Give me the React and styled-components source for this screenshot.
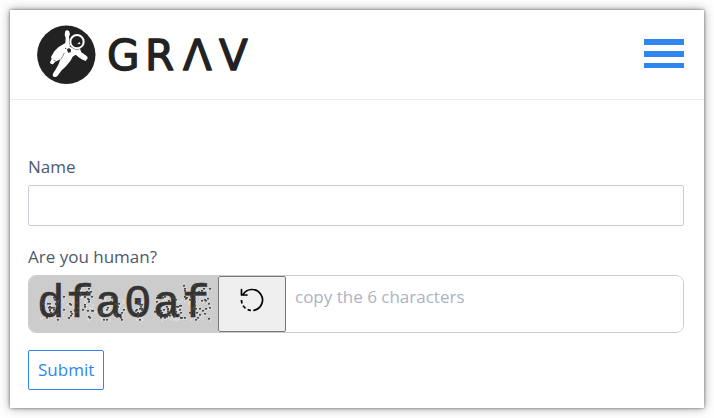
import React from "react";
import styled, { createGlobalStyle } from "styled-components";

const blue = "#3085ee";

const GlobalStyle = createGlobalStyle`
  *, *::before, *::after { box-sizing: border-box; }
  body {
    margin: 0;
    padding: 10px;
    background: #fefefe;
    color: #50596c;
    font: 18px/28px "Open Sans", "Noto Sans", sans-serif;
  }
  input, button { font: inherit; margin: 0; }
`;

const Card = styled.div`
  background: #fff;
  box-shadow: 0 0 3px rgba(0, 0, 0, 0.5), 0 0 10px rgba(0, 0, 0, 0.35);
`;

const Header = styled.header`
  display: flex;
  align-items: center;
  justify-content: space-between;
  height: 90px;
  padding: 0 20px 0 26px;
  border-bottom: 1px solid #ececec;
`;

const HomeLink = styled.a`
  display: block;
  color: #222;
`;

const LogoArt = styled.svg`
  display: block;
  font: 42px "DejaVu Sans", sans-serif;
`;

const MenuButton = styled.button`
  display: grid;
  grid-template-rows: 6px 6px 5px;
  gap: 6px;
  width: 40px;
  margin-bottom: 2px;
  padding: 0;
  border: 0;
  background: none;
  cursor: pointer;
`;

const MenuBar = styled.span`
  background: ${blue};
`;

const Form = styled.form`
  display: flex;
  flex-direction: column;
  gap: 17px;
  padding: 53px 20px 18px 18px;
`;

const Field = styled.div`
  display: flex;
  flex-direction: column;
  gap: 5px;
`;

const Label = styled.label`
  font-size: 17px;
  line-height: 27px;
`;

const TextInput = styled.input`
  width: 100%;
  height: 41px;
  padding: 0 9px;
  border: 1px solid #caccd7;
  border-radius: 2px;
  background: #fff;
  color: inherit;
`;

const CaptchaRow = styled.div`
  display: flex;
  height: 58px;
  overflow: hidden;
  border: 1px solid #ccc;
  border-radius: 8px;
`;

const CaptchaImage = styled.svg`
  flex: none;
  display: block;
  background: #ccc;
  font: 46px "Liberation Mono", monospace;
`;

const RefreshButton = styled.button`
  flex: none;
  display: flex;
  justify-content: center;
  align-items: flex-start;
  width: 68px;
  padding: 10px 0 0;
  border: 1px solid #767676;
  border-radius: 2px;
  background: #efefef;
  color: #000;
  cursor: pointer;
`;

const RefreshArt = styled.svg`
  flex: none;
  display: block;
`;

const CaptchaInput = styled.input`
  flex: 1;
  min-width: 0;
  padding: 0 9px 14px;
  border: 0;
  background: #fff;
  color: inherit;
  font-size: 17px;
  &::placeholder { color: #acb3c2; opacity: 1; }
`;

const SubmitButton = styled.button`
  align-self: flex-start;
  height: 40px;
  padding: 0 9px;
  border: 1px solid ${blue};
  border-radius: 2px;
  background: #fff;
  color: ${blue};
  font-size: 17px;
  cursor: pointer;
`;

function Logo() {
  return (
    <LogoArt width="216" height="60" viewBox="36 25 216 60" role="img" aria-label="Grav">
      <circle cx="66.3" cy="54.8" r="29.2" fill="#222" />
      <g transform="translate(30 20) scale(0.3333)">
        <path
          fill="#fff"
          d="M106 33 Q111 28 117 33 L120 42 L117 50 L119 65 Q120 75 127 80 Q137 88 150 86 L154 97 L166 105 Q175 110 173 115 L167 123 L158 119 L149 114 L137 104 L128 110 L121 123 L108 139 L95 151 L83 167 Q77 173 71 170 Q66 167 70 159 L78 147 L86 132 L91 118 L85 121 L75 126 L69 133 Q61 134 60 127 L65 117 L63 111 L73 94 L85 82 L96 75 L106 69 L107 54 L104 44 Z"
        />
        <circle cx="141" cy="65" r="24" fill="#222" />
        <circle cx="141" cy="65" r="20" fill="none" stroke="#fff" strokeWidth="6" />
        <circle cx="142" cy="66" r="14" fill="#222" />
        <path d="M142 73 L148 66 L152 71 Z" fill="#fff" />
        <path d="M111 88 L117 84 L123 89 L122 97 L114 98 Z" fill="#222" />
        <circle cx="107" cy="85" r="2" fill="#222" />
        <circle cx="121" cy="79" r="2" fill="#222" />
        <path d="M103 98 Q99 109 92 119 M78 124 L70 120" fill="none" stroke="#222" strokeWidth="1.5" />
      </g>
      <text
        y="70"
        x="107 145 183 219"
        fill="currentColor"
        stroke="currentColor"
        strokeWidth="1.3"
        strokeLinejoin="round"
      >
        GRΛV
      </text>
    </LogoArt>
  );
}

const glyphs = ["d", "f", "a", "0", "a", "f"];

function makeSpecks(count) {
  let seed = 71;
  const next = () => {
    seed = (seed * 16807) % 2147483647;
    return seed / 2147483647;
  };
  return Array.from({ length: count }, () => {
    const cell = [0, 1, 2, 2, 4, 4, 5, 5, 1, 0, 3][Math.floor(next() * 11)];
    const inset = cell === 3 ? 10 : 0;
    const tall = cell === 1 || cell === 5 ? 34 : 24;
    return {
      x: Math.round(9 + cell * 29 + inset + next() * (27 - inset * 2)),
      y: Math.round(43 - next() * (inset ? 20 : tall)),
    };
  });
}

const darkSpecks = makeSpecks(190);
const paleSpecks = makeSpecks(420).map(({ x, y }) => ({ x: x + 1, y: y + 1 }));

function Captcha() {
  return (
    <CaptchaImage width="189" height="56" viewBox="0 0 189 56" role="img" aria-label="Captcha code">
      {paleSpecks.map((s, i) => (
        <rect key={i} x={s.x} y={s.y} width="2" height="2" fill="#d8d8d8" />
      ))}
      <text y="41" x="8 37 66 95 124 153" fill="#333" stroke="#333" strokeWidth="0.6">
        {glyphs.join("")}
      </text>
      {darkSpecks.map((s, i) => (
        <rect key={i} x={s.x} y={s.y} width="2" height="1.6" fill="#484848" />
      ))}
    </CaptchaImage>
  );
}

function RefreshIcon() {
  return (
    <RefreshArt width="26" height="26" viewBox="0 0 26 26" fill="none" stroke="currentColor" strokeWidth="1.7" aria-hidden="true">
      <path d="M4 7.6 A10.5 10.5 0 1 1 15 23.3" strokeLinecap="round" />
      <path d="M2.5 2.5 V8 H8" strokeLinecap="round" strokeLinejoin="round" />
      <path d="M12 23.5 A10.5 10.5 0 0 1 2.5 12.5" strokeDasharray="3.5 2.5" />
    </RefreshArt>
  );
}

export default function App() {
  return (
    <>
      <GlobalStyle />
      <Card>
        <Header>
          <HomeLink href="#"><Logo /></HomeLink>
          <MenuButton type="button" aria-label="Menu">
            <MenuBar /><MenuBar /><MenuBar />
          </MenuButton>
        </Header>
        <Form onSubmit={(e) => e.preventDefault()}>
          <Field>
            <Label htmlFor="name">Name</Label>
            <TextInput id="name" name="name" type="text" />
          </Field>
          <Field>
            <Label htmlFor="captcha">Are you human?</Label>
            <CaptchaRow>
              <Captcha />
              <RefreshButton type="button" aria-label="Refresh captcha"><RefreshIcon /></RefreshButton>
              <CaptchaInput id="captcha" name="captcha" type="text" placeholder="copy the 6 characters" />
            </CaptchaRow>
          </Field>
          <SubmitButton type="submit">Submit</SubmitButton>
        </Form>
      </Card>
    </>
  );
}
